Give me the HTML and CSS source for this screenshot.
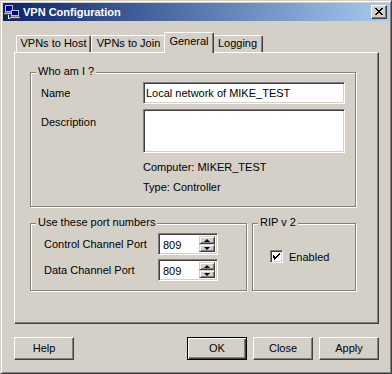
FILE: index.html
```html
<!DOCTYPE html>
<html>
<head>
<meta charset="utf-8">
<link rel="stylesheet" href="styles.css">
</head>
<body>
<div class="window">
  <div class="titlebar">
    <svg class="icon" width="16" height="16" viewBox="0 0 16 16" shape-rendering="crispEdges">
      <rect x="1" y="1" width="8" height="7" fill="#c0c0c0"/>
      <rect x="2" y="2" width="6" height="5" fill="#0000a0"/>
      <rect x="1" y="8" width="8" height="1" fill="#808080"/>
      <rect x="0" y="9" width="10" height="2" fill="#c0c0c0"/>
      <rect x="0" y="10" width="10" height="1" fill="#404040"/>
      <rect x="4" y="11" width="1" height="4" fill="#fff"/>
      <rect x="4" y="14" width="5" height="1" fill="#fff"/>
      <rect x="7" y="6" width="8" height="6" fill="#c0c0c0"/>
      <rect x="8" y="7" width="6" height="4" fill="#0000a0"/>
      <rect x="7" y="12" width="8" height="1" fill="#808080"/>
      <rect x="6" y="13" width="10" height="2" fill="#c0c0c0"/>
      <rect x="6" y="14" width="10" height="1" fill="#404040"/>
    </svg>
    <span class="title">VPN Configuration</span>
    <div class="xbtn">
      <svg width="8" height="7" viewBox="0 0 8 7" shape-rendering="crispEdges">
        <path d="M0 0h2v1h-2zM6 0h2v1h-2zM1 1h2v1h-2zM5 1h2v1h-2zM2 2h4v1h-4zM3 3h2v1h-2zM2 4h4v1h-4zM1 5h2v1h-2zM5 5h2v1h-2zM0 6h2v1h-2zM6 6h2v1h-2z" fill="#000"/>
      </svg>
    </div>
  </div>
  <div class="content">
    <div class="tabs">
      <div class="tab w-host">VPNs to Host</div>
      <div class="tab w-join">VPNs to Join</div>
      <div class="tab selected">General</div>
      <div class="tab w-log">Logging</div>
    </div>
    <div class="panel">
      <div class="group who">
        <span class="legend">Who am I ?</span>
        <div class="row">
          <span class="label">Name</span>
          <div class="edit name">Local network of MIKE_TEST</div>
        </div>
        <div class="row top desc-row">
          <span class="label desc-label">Description</span>
          <div class="edit desc"></div>
        </div>
        <div class="info first">Computer: MIKER_TEST</div>
        <div class="info">Type: Controller</div>
      </div>
      <div class="row2">
        <div class="group ports">
          <span class="legend">Use these port numbers</span>
          <div class="row">
            <span class="plabel">Control Channel Port</span>
            <div class="edit spin"><span class="val">809</span>
              <div class="spinbtns"><div class="sb"><span class="up"></span></div><div class="sb"><span class="down"></span></div></div>
            </div>
          </div>
          <div class="row prow2">
            <span class="plabel">Data Channel Port</span>
            <div class="edit spin"><span class="val">809</span>
              <div class="spinbtns"><div class="sb"><span class="up"></span></div><div class="sb"><span class="down"></span></div></div>
            </div>
          </div>
        </div>
        <div class="group rip">
          <span class="legend">RIP v 2</span>
          <div class="row">
            <div class="checkbox">
              <svg width="7" height="7" viewBox="0 0 7 7" shape-rendering="crispEdges">
                <path d="M6 0h1v1h-1zM5 1h2v1h-2zM0 2h1v1h-1zM4 2h2v1h-2zM0 3h2v1h-2zM3 3h2v1h-2zM0 4h4v1h-4zM1 5h2v1h-2zM1 6h1v1h-1z" fill="#000"/>
              </svg>
            </div>
            <span class="cblabel">Enabled</span>
          </div>
        </div>
      </div>
    </div>
    <div class="buttons">
      <div class="btn">Help</div>
      <div class="btn default push">OK</div>
      <div class="btn">Close</div>
      <div class="btn">Apply</div>
    </div>
  </div>
</div>
</body>
</html>
```
FILE: styles.css
```css
html, body {
  margin: 0;
  padding: 0;
  background: #D4D0C8;
}
body {
  font-family: "Liberation Sans", Arial, sans-serif;
  font-size: 11px;
  color: #000;
}
.window {
  width: 392px;
  height: 374px;
  box-sizing: border-box;
  background: #D4D0C8;
  border: 1px solid;
  border-color: #D4D0C8 #404040 #404040 #D4D0C8;
  box-shadow: inset 1px 1px #fff, inset -1px -1px #808080;
  padding: 2px;
  display: flex;
  flex-direction: column;
}
.titlebar {
  height: 18px;
  flex: none;
  background: linear-gradient(to right, #0A246A, #A6CAF0);
  display: flex;
  align-items: center;
  padding: 0 2px 0 1px;
}
.icon {
  flex: none;
  margin-right: 3px;
}
.title {
  flex: 1;
  color: #fff;
  font-weight: bold;
  line-height: 18px;
}
.xbtn {
  width: 16px;
  height: 14px;
  box-sizing: border-box;
  background: #D4D0C8;
  border: 1px solid;
  border-color: #fff #404040 #404040 #fff;
  box-shadow: inset -1px -1px #808080;
  display: flex;
  align-items: center;
  justify-content: center;
  padding: 0 1px 1px 0;
}
.content {
  padding: 11px 10px 0 11px;
}
.tabs {
  display: flex;
  align-items: flex-end;
  height: 20px;
  padding-left: 2px;
  position: relative;
  z-index: 1;
}
.tab {
  box-sizing: border-box;
  height: 17px;
  background: #D4D0C8;
  border-top: 1px solid #fff;
  border-left: 1px solid #fff;
  border-right: 1px solid #404040;
  box-shadow: inset -1px 0 #808080;
  border-radius: 2px 2px 0 0;
  text-align: center;
  line-height: 15px;
  white-space: nowrap;
}
.w-host { width: 75px; }
.w-join { width: 75px; }
.w-log { width: 51px; }
.tab.selected {
  width: 50px;
  height: 21px;
  margin: 0 -2px -1px -2px;
  padding-top: 2px;
  line-height: 13px;
  position: relative;
  z-index: 2;
}
.panel {
  box-sizing: border-box;
  height: 272px;
  border: 1px solid;
  border-color: #fff #404040 #404040 #fff;
  box-shadow: inset -1px -1px #808080;
  padding: 19px 0 0 15px;
}
.group {
  position: relative;
  box-sizing: border-box;
  border: 1px solid #808080;
  box-shadow: inset 1px 1px #fff, 1px 1px #fff;
}
.legend {
  position: absolute;
  left: 5px;
  top: -8px;
  padding: 0 2px;
  background: #D4D0C8;
  line-height: 13px;
  white-space: nowrap;
}
.who {
  width: 326px;
  height: 135px;
  padding: 9px 10px 0 10px;
}
.row {
  display: flex;
  align-items: center;
}
.row.top {
  align-items: flex-start;
}
.label {
  width: 102px;
  flex: none;
}
.desc-row {
  margin-top: 5px;
}
.desc-label {
  padding-top: 7px;
  line-height: 13px;
}
.edit {
  box-sizing: border-box;
  background: #fff;
  border: 1px solid;
  border-color: #808080 #fff #fff #808080;
  box-shadow: inset 1px 1px #404040, inset -1px -1px #D4D0C8;
}
.name {
  width: 203px;
  height: 22px;
  line-height: 20px;
  padding-left: 2px;
  white-space: nowrap;
}
.desc {
  width: 203px;
  height: 44px;
}
.info {
  margin-left: 102px;
  line-height: 20px;
}
.info.first {
  margin-top: 4px;
}
.row2 {
  display: flex;
  gap: 5px;
  margin-top: 16px;
}
.ports {
  width: 217px;
  height: 68px;
  padding: 9px 0 0 13px;
}
.plabel {
  width: 114px;
  flex: none;
}
.prow2 {
  margin-top: 4px;
}
.spin {
  width: 60px;
  height: 22px;
  display: flex;
  padding: 2px 2px 2px 2px;
}
.val {
  flex: 1;
  line-height: 18px;
  padding-left: 2px;
}
.spinbtns {
  width: 16px;
  display: flex;
  flex-direction: column;
}
.sb {
  box-sizing: border-box;
  height: 9px;
  background: #D4D0C8;
  border: 1px solid;
  border-color: #D4D0C8 #404040 #404040 #D4D0C8;
  box-shadow: inset 1px 1px #fff, inset -1px -1px #808080;
  display: flex;
  align-items: center;
  justify-content: center;
}
.up, .down {
  width: 0;
  height: 0;
  border-left: 3px solid transparent;
  border-right: 3px solid transparent;
}
.up {
  border-bottom: 3px solid #000;
}
.down {
  border-top: 3px solid #000;
}
.rip {
  width: 104px;
  height: 68px;
  padding: 26px 0 0 17px;
}
.checkbox {
  box-sizing: border-box;
  width: 13px;
  height: 13px;
  background: #fff;
  border: 1px solid;
  border-color: #808080 #fff #fff #808080;
  box-shadow: inset 1px 1px #404040, inset -1px -1px #D4D0C8;
  display: flex;
  align-items: center;
  justify-content: center;
}
.cblabel {
  margin-left: 6px;
}
.buttons {
  display: flex;
  gap: 6px;
  margin-top: 13px;
}
.btn {
  box-sizing: border-box;
  width: 60px;
  height: 23px;
  background: #D4D0C8;
  border: 1px solid;
  border-color: #fff #404040 #404040 #fff;
  box-shadow: inset -1px -1px #808080;
  text-align: center;
  line-height: 21px;
}
.btn.default {
  border-color: #000;
  box-shadow: inset 1px 1px #fff, inset -1px -1px #404040, inset -2px -2px #808080;
}
.push {
  margin-left: auto;
}
```
